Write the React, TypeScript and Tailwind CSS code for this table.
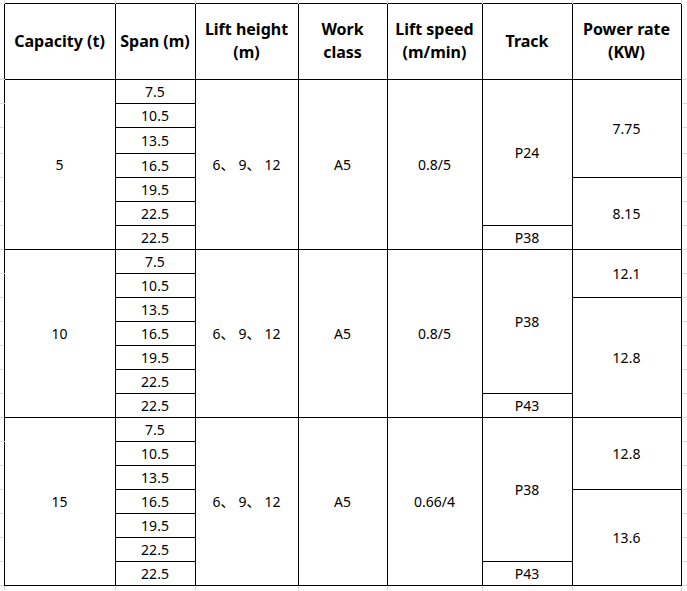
import React from "react";

const spans = ["7.5", "10.5", "13.5", "16.5", "19.5", "22.5", "22.5"];

type Group = {
  cap: string;
  speed: string;
  track: [string, number][];
  power: [string, number][];
  tall: number;
};

const groups: Group[] = [
  { cap: "5", speed: "0.8/5", track: [["P24", 6], ["P38", 1]], power: [["7.75", 4], ["8.15", 3]], tall: 2 },
  { cap: "10", speed: "0.8/5", track: [["P38", 6], ["P43", 1]], power: [["12.1", 2], ["12.8", 5]], tall: -1 },
  { cap: "15", speed: "0.66/4", track: [["P38", 6], ["P43", 1]], power: [["12.8", 3], ["13.6", 4]], tall: -1 },
];

const cell = "border border-black p-0 text-center align-middle";
const marginL = "p-0 border-b border-[#d9d9d9]";
const marginR = "p-0 border-b border-r border-[#d9d9d9]";
const edge = "p-0 border-r border-[#d9d9d9]";
const head = "border border-black p-0 text-center align-middle font-bold text-[16px] leading-[23px]";

function startsAt(list: [string, number][], i: number): [string, number] | null {
  let acc = 0;
  for (const item of list) {
    if (acc === i) return item;
    acc += item[1];
  }
  return null;
}

function Heights() {
  return (
    <span>
      6<span className="mr-[4px]">、</span>9<span className="mr-[4px]">、</span>12
    </span>
  );
}

function EdgeRow({ h }: { h: string }) {
  return (
    <tr className={h}>
      <td className={edge} />
      <td className={edge} />
      <td className={edge} />
      <td className={edge} />
      <td className={edge} />
      <td className={edge} />
      <td className={edge} />
      <td className={edge} />
      <td className={edge} />
    </tr>
  );
}

export default function App() {
  return (
    <div className="w-[687px] h-[591px] bg-white overflow-hidden font-['Noto_Sans','Noto_Sans_CJK_SC',sans-serif] text-black text-[14px]">
      <table className="border-collapse table-fixed w-[687px]">
        <colgroup>
          <col className="w-[4px]" />
          <col className="w-[111px]" />
          <col className="w-[80px]" />
          <col className="w-[103px]" />
          <col className="w-[89px]" />
          <col className="w-[95px]" />
          <col className="w-[90px]" />
          <col className="w-[109px]" />
          <col className="w-[6px]" />
        </colgroup>
        <tbody>
          <EdgeRow h="h-[3px]" />
          <tr className="h-[76px]">
            <td className={marginL} />
            <td className={head}>Capacity (t)</td>
            <td className={head}>Span (m)</td>
            <td className={head}>
              Lift height
              <br />
              (m)
            </td>
            <td className={head}>
              Work
              <br />
              class
            </td>
            <td className={head}>
              Lift speed
              <br />
              (m/min)
            </td>
            <td className={head}>Track</td>
            <td className={head}>
              Power rate
              <br />
              (KW)
            </td>
            <td className={marginR} />
          </tr>
          {groups.map((g, gi) =>
            spans.map((s, i) => {
              const t = startsAt(g.track, i);
              const p = startsAt(g.power, i);
              return (
                <tr key={`${gi}-${i}`} className={i === g.tall ? "h-[26px]" : "h-[24px]"}>
                  <td className={marginL} />
                  {i === 0 && (
                    <td rowSpan={7} className={cell}>
                      {g.cap}
                    </td>
                  )}
                  <td className={cell}>{s}</td>
                  {i === 0 && (
                    <td rowSpan={7} className={cell}>
                      <Heights />
                    </td>
                  )}
                  {i === 0 && (
                    <td rowSpan={7} className={cell}>
                      A5
                    </td>
                  )}
                  {i === 0 && (
                    <td rowSpan={7} className={cell}>
                      {g.speed}
                    </td>
                  )}
                  {t && (
                    <td rowSpan={t[1]} className={cell}>
                      {t[0]}
                    </td>
                  )}
                  {p && (
                    <td rowSpan={p[1]} className={cell}>
                      {p[0]}
                    </td>
                  )}
                  <td className={marginR} />
                </tr>
              );
            })
          )}
          <EdgeRow h="h-[6px]" />
        </tbody>
      </table>
    </div>
  );
}
